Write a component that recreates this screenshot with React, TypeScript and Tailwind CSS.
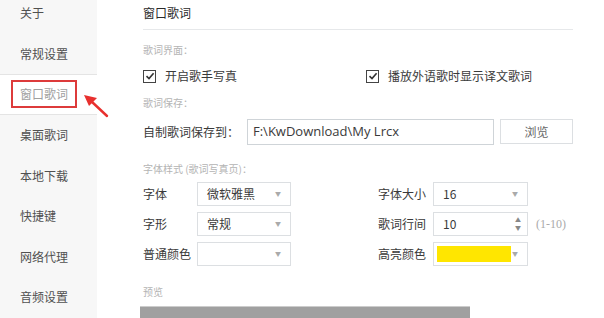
const font = { fontFamily: '"Noto Sans CJK SC", "Noto Sans", sans-serif' };

const navItems = ['关于', '常规设置', '窗口歌词', '桌面歌词', '本地下载', '快捷键', '网络代理', '音频设置'];

function Caret() {
  return <span className="text-[6px] text-[#aaa] leading-none">▼</span>;
}

function Check() {
  return (
    <span className="w-[13px] h-[13px] border border-[#444] flex items-center justify-center bg-white">
      <svg width="10" height="10" viewBox="0 0 10 10">
        <path d="M1.5 5.2 L4 7.6 L8.6 2.2" fill="none" stroke="#333" strokeWidth="1.6" />
      </svg>
    </span>
  );
}

function Select({ value, w }: { value?: string; w: string }) {
  return (
    <div className={`${w} h-[24px] border border-[#dcdfe2] bg-white flex items-center justify-between pl-[9px] pr-[9px]`}>
      <span className="text-[12px] text-[#3a3a3a]">{value}</span>
      <Caret />
    </div>
  );
}

export default function App() {
  return (
    <div className="relative w-[604px] h-[318px] overflow-hidden flex bg-white" style={font}>
      {/* sidebar */}
      <div className="w-[97px] shrink-0 bg-[#f7f7f7] flex flex-col">
        <div className="-mt-[7px]">
          {navItems.map((item) => {
            const active = item === '窗口歌词';
            return (
              <div
                key={item}
                className={`h-[40.6px] flex items-center pl-[20px] text-[12px] ${
                  active ? 'bg-white border-y border-[#e4e4e4] text-[#a0a0a0]' : 'text-[#505050]'
                }`}
              >
                {active ? (
                  <span className="-ml-[9px] px-[7px] h-[28px] flex items-center border-2 border-[#dd3b3b]">{item}</span>
                ) : (
                  item
                )}
              </div>
            );
          })}
        </div>
      </div>

      {/* content */}
      <div className="flex-1 pl-[46px] pr-[39px] flex flex-col text-[12px] text-[#3a3a3a]">
        <div className="h-[30px] border-b border-[#e6e8ea] pt-[4px] text-[12px] text-[#2a2a2a] leading-[18px]">窗口歌词</div>

        <div className="mt-[12px] h-[16px] flex items-center text-[10px] text-[#b4b4b4]">歌词界面：</div>

        <div className="mt-[9px] h-[20px] flex items-center">
          <div className="w-[223px] flex items-center gap-[9px]">
            <Check />
            <span>开启歌手写真</span>
          </div>
          <div className="flex items-center gap-[9px]">
            <Check />
            <span>播放外语歌时显示译文歌词</span>
          </div>
        </div>

        <div className="mt-[9px] h-[16px] flex items-center text-[10px] text-[#b4b4b4]">歌词保存：</div>

        <div className="mt-[8px] h-[26px] flex items-center">
          <span className="w-[104px]">自制歌词保存到：</span>
          <div
            className="w-[247px] h-[26px] border border-[#cfd4d8] flex items-center pl-[5px] text-[13px] text-[#3a3a3a]"
            style={{ fontFamily: '"Open Sans", "Noto Sans", sans-serif' }}
          >
            F:\KwDownload\My Lrcx
          </div>
          <div className="ml-[6px] w-[73px] h-[25px] border border-[#dcdfe2] flex items-center justify-center text-[#666]">浏览</div>
        </div>

        <div className="mt-[16px] h-[16px] flex items-center text-[10px] text-[#b4b4b4]">字体样式 (歌词写真页)：</div>

        <div className="mt-[5px] grid grid-cols-[235px_1fr] gap-y-[5px]">
          <div className="h-[25px] flex items-center">
            <span className="w-[54px]">字体</span>
            <Select value="微软雅黑" w="w-[94px]" />
          </div>
          <div className="h-[25px] flex items-center">
            <span className="w-[55px]">字体大小</span>
            <Select value="16" w="w-[95px]" />
          </div>

          <div className="h-[25px] flex items-center">
            <span className="w-[54px]">字形</span>
            <Select value="常规" w="w-[94px]" />
          </div>
          <div className="h-[25px] flex items-center">
            <span className="w-[55px]">歌词行间</span>
            <div className="w-[95px] h-[24px] border border-[#dcdfe2] flex items-center justify-between pl-[9px] pr-[6px]">
              <span className="text-[12px]">10</span>
              <span className="flex flex-col items-center text-[6px] text-[#888] leading-[8px]">
                <span>▲</span>
                <span>▼</span>
              </span>
            </div>
            <span className="ml-[8px] text-[#aaa] text-[12px]" style={{ fontFamily: '"Liberation Serif", serif' }}>
              (1-10)
            </span>
          </div>

          <div className="h-[25px] flex items-center">
            <span className="w-[54px]">普通颜色</span>
            <Select w="w-[94px]" />
          </div>
          <div className="h-[25px] flex items-center">
            <span className="w-[55px]">高亮颜色</span>
            <div className="w-[95px] h-[24px] border border-[#dcdfe2] flex items-center justify-between pl-[3px] pr-[9px]">
              <span className="w-[74px] h-[16px] bg-[#ffe600]" />
              <Caret />
            </div>
          </div>
        </div>

        <div className="mt-[17px] h-[16px] flex items-center text-[10px] text-[#b4b4b4]">预览</div>
        <div className="mt-[7px] -ml-[3px] w-[330px] h-[12px] bg-[#a0a0a0] border-t border-[#cccccc] shrink-0" />
      </div>

      {/* annotation arrow */}
      <svg className="absolute left-[80px] top-[88px]" width="32" height="32" viewBox="0 0 32 32">
        <path d="M27 28 L11 13" stroke="#e8302e" strokeWidth="2.4" strokeLinecap="round" />
        <path d="M4 7 L17 10 L9 18 Z" fill="#e8302e" />
      </svg>
    </div>
  );
}
